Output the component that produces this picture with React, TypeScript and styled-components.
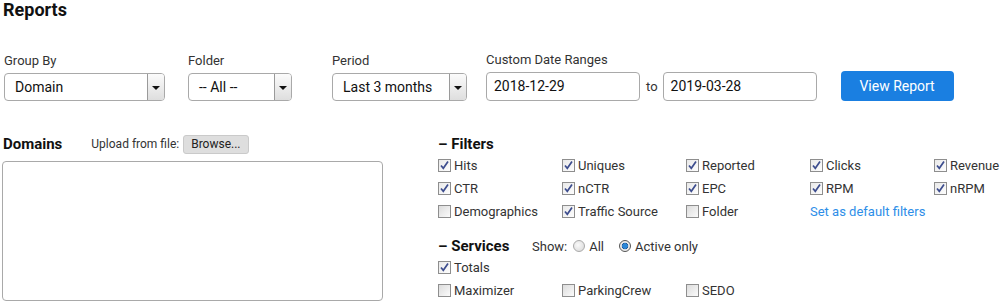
import React from "react";
import styled, { createGlobalStyle } from "styled-components";

const Global = createGlobalStyle`
  html, body { margin: 0; padding: 0; background: #fff; }
  body { font-family: Roboto, "Liberation Sans", Arial, sans-serif; color: #222; }
  * { box-sizing: border-box; }
`;

const Page = styled.div`
  width: 1002px;
  height: 303px;
  padding-left: 3px;
  overflow: hidden;
`;

const Title = styled.h1`
  margin: 0;
  height: 22px;
  line-height: 20px;
  font-size: 18px;
  font-weight: 700;
  color: #111;
`;

const FormRow = styled.div`
  display: flex;
  align-items: flex-end;
  margin-top: 30px;
  padding-left: 1px;
`;

const Field = styled.div<{ $w?: number }>`
  display: flex;
  flex-direction: column;
  width: ${(p) => (p.$w ? `${p.$w}px` : "auto")};
  flex: none;
`;

const Label = styled.div`
  font-size: 13px;
  line-height: 16px;
  height: 16px;
  margin-bottom: 4px;
  color: #333;
`;

const SelectBox = styled.div<{ $w: number }>`
  width: ${(p) => p.$w}px;
  height: 28px;
  border: 1px solid #a9a9a9;
  border-radius: 4px;
  background: #fff;
  display: flex;
  align-items: stretch;
  font-size: 14px;
  overflow: hidden;
`;

const SelectText = styled.span`
  flex: 1;
  padding-left: 10px;
  line-height: 26px;
  color: #111;
  white-space: nowrap;
`;

const SelectButton = styled.span`
  width: 17px;
  flex: none;
  border-left: 1px solid #9a9a9a;
  background: linear-gradient(#fbfbfb, #dedede);
  display: flex;
  align-items: center;
  justify-content: center;
  &::after {
    content: "";
    border-left: 4px solid transparent;
    border-right: 4px solid transparent;
    border-top: 4px solid #111;
    margin-top: 1px;
  }
`;

const DateRow = styled.div`
  display: flex;
  align-items: center;
`;

const TextInput = styled.div`
  width: 154px;
  height: 29px;
  border: 1px solid #a9a9a9;
  border-radius: 4px;
  padding-left: 7px;
  font-size: 14px;
  line-height: 27px;
  color: #111;
`;

const To = styled.span`
  font-size: 13px;
  color: #333;
  margin: 0 5px 0 6px;
`;

const Button = styled.button`
  margin-left: 24px;
  width: 113px;
  height: 30px;
  border: none;
  border-radius: 4px;
  background: #1a7fe1;
  color: #fff;
  font-family: inherit;
  font-size: 14px;
  padding: 0;
`;

const Bottom = styled.div`
  display: flex;
  margin-top: 33px;
`;

const LeftCol = styled.div`
  width: 435px;
  flex: none;
`;

const DomainsHead = styled.div`
  display: flex;
  align-items: center;
  height: 20px;
`;

const Heading = styled.span`
  font-size: 15px;
  font-weight: 700;
  color: #111;
`;

const Upload = styled.span`
  margin-left: 29px;
  font-size: 12px;
  color: #333;
`;

const Browse = styled.span`
  margin-left: 4px;
  height: 19px;
  line-height: 17px;
  padding: 0 7px;
  font-size: 12px;
  color: #222;
  background: #dedede;
  border: 1px solid #cacaca;
  border-radius: 3px;
`;

const TextArea = styled.div`
  margin-top: 7px;
  margin-left: -1px;
  width: 381px;
  height: 140px;
  border: 1px solid #a9a9a9;
  border-radius: 4px;
`;

const RightCol = styled.div`
  flex: 1;
`;

const SectionHead = styled.div<{ $mt?: number }>`
  display: flex;
  align-items: center;
  height: 20px;
  margin-top: ${(p) => p.$mt ?? 0}px;
`;

const SecTitle = styled.span`
  font-size: 15px;
  font-weight: 700;
  color: #111;
  width: 94px;
`;

const Grid = styled.div`
  display: grid;
  grid-template-columns: repeat(5, 124px);
  grid-auto-rows: 23px;
`;

const Item = styled.label`
  display: flex;
  align-items: center;
  font-size: 13px;
  color: #333;
  white-space: nowrap;
`;

const Box = styled.span<{ $on: boolean }>`
  width: 13px;
  height: 13px;
  flex: none;
  margin-right: 3px;
  border: 1px solid #8e8e8e;
  background: ${(p) =>
    p.$on ? "linear-gradient(135deg, #e9e9e9, #fdfdfd)" : "linear-gradient(135deg, #dcdcdc, #fbfbfb)"};
  display: flex;
  align-items: center;
  justify-content: center;
`;

const Link = styled.span`
  font-size: 13px;
  color: #2d8ee8;
  white-space: nowrap;
  display: flex;
  align-items: center;
  grid-column: span 2;
`;

const Show = styled.span`
  font-size: 13px;
  color: #333;
  margin-right: 6px;
`;

const Radio = styled.span<{ $on: boolean }>`
  width: 12px;
  height: 12px;
  border-radius: 50%;
  border: 1px solid ${(p) => (p.$on ? "#555" : "#aaa")};
  background: ${(p) =>
    p.$on
      ? "radial-gradient(circle, #2b86d6 0 2.5px, #1d4f8a 3px, #e8e8e8 3.6px, #fafafa)"
      : "radial-gradient(circle at 40% 40%, #fafafa, #d6d6d6)"};
  margin-right: 4px;
  flex: none;
`;

const RadioLabel = styled.span`
  font-size: 13px;
  color: #333;
  margin-right: 15px;
`;

const Check = () => (
  <svg width="11" height="11" viewBox="0 0 11 11">
    <path d="M2 5.5 L4.3 8.3 L9 1.6" fill="none" stroke="#3d4d8e" strokeWidth="1.7" />
  </svg>
);

const CB = ({ on, label }: { on: boolean; label: string }) => (
  <Item>
    <Box $on={on}>{on && <Check />}</Box>
    {label}
  </Item>
);

const Select = ({ w, text }: { w: number; text: string }) => (
  <SelectBox $w={w}>
    <SelectText>{text}</SelectText>
    <SelectButton />
  </SelectBox>
);

export default function App() {
  return (
    <Page>
      <Global />
      <Title>Reports</Title>
      <FormRow>
        <Field $w={184}>
          <Label>Group By</Label>
          <Select w={161} text="Domain" />
        </Field>
        <Field $w={144}>
          <Label>Folder</Label>
          <Select w={104} text="-- All --" />
        </Field>
        <Field $w={154}>
          <Label>Period</Label>
          <Select w={135} text="Last 3 months" />
        </Field>
        <Field>
          <Label>Custom Date Ranges</Label>
          <DateRow>
            <TextInput>2018-12-29</TextInput>
            <To>to</To>
            <TextInput>2019-03-28</TextInput>
          </DateRow>
        </Field>
        <Button>View Report</Button>
      </FormRow>
      <Bottom>
        <LeftCol>
          <DomainsHead>
            <Heading>Domains</Heading>
            <Upload>Upload from file:</Upload>
            <Browse>Browse...</Browse>
          </DomainsHead>
          <TextArea />
        </LeftCol>
        <RightCol>
          <SectionHead>
            <SecTitle>– Filters</SecTitle>
          </SectionHead>
          <Grid>
            <CB on label="Hits" />
            <CB on label="Uniques" />
            <CB on label="Reported" />
            <CB on label="Clicks" />
            <CB on label="Revenue" />
            <CB on label="CTR" />
            <CB on label="nCTR" />
            <CB on label="EPC" />
            <CB on label="RPM" />
            <CB on label="nRPM" />
            <CB on={false} label="Demographics" />
            <CB on label="Traffic Source" />
            <CB on={false} label="Folder" />
            <Link>Set as default filters</Link>
          </Grid>
          <SectionHead $mt={13}>
            <SecTitle>– Services</SecTitle>
            <Show>Show:</Show>
            <Radio $on={false} />
            <RadioLabel>All</RadioLabel>
            <Radio $on />
            <RadioLabel>Active only</RadioLabel>
          </SectionHead>
          <Grid>
            <CB on label="Totals" />
          </Grid>
          <Grid>
            <CB on={false} label="Maximizer" />
            <CB on={false} label="ParkingCrew" />
            <CB on={false} label="SEDO" />
          </Grid>
        </RightCol>
      </Bottom>
    </Page>
  );
}
